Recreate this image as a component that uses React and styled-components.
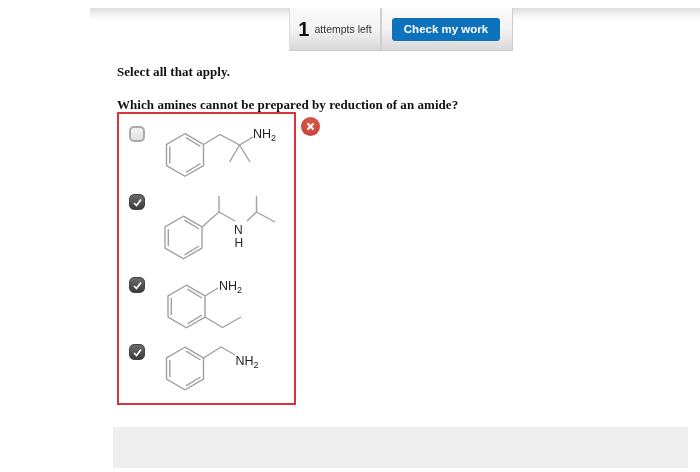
import React from 'react'
import styled, { createGlobalStyle } from 'styled-components'

const GlobalStyle = createGlobalStyle`
  html, body {
    margin: 0;
    padding: 0;
    background: #fff;
  }
`
const Page = styled.div`
  width: 700px;
  height: 472px;
  overflow: hidden;
  display: flex;
  flex-direction: column;
  padding-top: 8px;
  box-sizing: border-box;
  filter: blur(0.35px);
`
const TopBar = styled.div`
  margin-left: 90px;
  height: 43px;
  display: flex;
  padding-left: 199px;
  background: linear-gradient(#dcdcdc, #f4f4f4 7px, #fff 13px);
`
const Toolbar = styled.div`
  display: flex;
  height: 43px;
  background: linear-gradient(#fafafa, #f3f3f3 50%, #d9d9d9);
  border-bottom: 1px solid #c8c8c8;
  border-left: 1px solid #ddd;
  border-right: 1px solid #ccc;
  box-sizing: border-box;
`
const Attempts = styled.div`
  width: 92px;
  box-sizing: border-box;
  display: flex;
  align-items: center;
  justify-content: center;
  gap: 5px;
  border-right: 2px solid #cfcfcf;
  font-family: "Liberation Sans", Arial, sans-serif;
  color: #333;
  font-size: 10.5px;
`
const AttemptCount = styled.span`
  font-size: 20px;
  font-weight: bold;
  color: #111;
`
const CheckButton = styled.div`
  width: 108px;
  height: 23px;
  margin: 10px 12px 0 10px;
  border-radius: 3px;
  background: #0f72bd;
  color: #fff;
  font-family: "Liberation Sans", Arial, sans-serif;
  font-size: 11.5px;
  font-weight: bold;
  display: flex;
  align-items: center;
  justify-content: center;
  padding-bottom: 2px;
  box-sizing: border-box;
`
const Content = styled.div`
  padding: 14px 0 0 117px;
  font-family: "Liberation Serif", "Times New Roman", serif;
  font-weight: bold;
  font-size: 13px;
  color: #111;
`
const Prompt = styled.p`
  margin: 0;
  height: 33px;
  line-height: 14px;
  letter-spacing: 0.05px;
`
const AnswerRow = styled.div`
  display: flex;
  align-items: flex-start;
  margin-top: -19px;
`
const AnswerBox = styled.div`
  width: 179px;
  height: 293px;
  box-sizing: border-box;
  border: 2px solid #d8343c;
  padding: 12px 0 0 10px;
  display: flex;
  flex-direction: column;
`
const Option = styled.div`
  display: flex;
  gap: 15px;
  height: ${props => props.$height}px;
`
const Box = styled.div`
  width: 16px;
  height: 16px;
  box-sizing: border-box;
  border-radius: 5px;
  flex: none;
  border: ${props => (props.$checked ? '1px solid #444' : '2px solid #aaa')};
  background: ${props => (props.$checked ? 'linear-gradient(#6a6a6a, #3c3c3c)' : 'linear-gradient(#f2f2f2, #e2e2e2)')};
  display: flex;
  align-items: center;
  justify-content: center;
`
const ErrorBadge = styled.div`
  width: 19px;
  height: 19px;
  margin: 5px 0 0 5px;
  border-radius: 50%;
  background: radial-gradient(circle at 50% 35%, #dc5c4c, #c43a30);
  display: flex;
  align-items: center;
  justify-content: center;
`
const Footer = styled.div`
  margin: 22px 0 0 113px;
  width: 575px;
  height: 41px;
  background: #eeeeee;
`
const Bond = styled.path`
  fill: none;
  stroke: #a0a0a0;
  stroke-width: 1.4;
`
const Label = styled.text`
  font-family: "Liberation Sans", Arial, sans-serif;
  font-size: ${props => props.$size || 12.5}px;
  font-weight: normal;
  fill: #222;
`
const Sub = styled.tspan`
  font-size: 9px;
`

const Tick = () => (
  <svg width="11" height="11" viewBox="0 0 11 11">
    <path d="M2 6 L4.5 8.5 L9 2.5" fill="none" stroke="#fff" strokeWidth="1.7" />
  </svg>
)

// benzene ring, pointy top, three inner double bonds
const Ring = ({ cx, cy }) => {
  const w = 18.5
  const h = 10.5
  const r = 21.3
  const outer = `M${cx} ${cy - r} L${cx + w} ${cy - h} L${cx + w} ${cy + h} L${cx} ${cy + r} L${cx - w} ${cy + h} L${cx - w} ${cy - h} Z`
  const inner = [
    `M${cx - w + 3.3} ${cy - h + 2} L${cx - w + 3.3} ${cy + h - 2}`,
    `M${cx + 1} ${cy - r + 4} L${cx + w - 3} ${cy - h + 2}`,
    `M${cx + 1} ${cy + r - 4} L${cx + w - 3} ${cy + h - 2}`,
  ].join(' ')
  return <Bond d={`${outer} ${inner}`} />
}

const Nh2 = ({ x, y }) => (
  <Label x={x} y={y}>NH<Sub dy="2.5">2</Sub></Label>
)

const Molecule = ({ height, children }) => (
  <svg width="125" height={height} viewBox={`0 0 125 ${height}`} style={{ overflow: 'visible' }}>
    {children}
  </svg>
)

const App = () => (
  <Page>
    <GlobalStyle />
    <TopBar>
      <Toolbar>
        <Attempts>
          <AttemptCount>1</AttemptCount>
          attempts left
        </Attempts>
        <CheckButton>Check my work</CheckButton>
      </Toolbar>
    </TopBar>
    <Content>
      <Prompt>Select all that apply.</Prompt>
      <Prompt>Which amines cannot be prepared by reduction of an amide?</Prompt>
      <AnswerRow>
        <AnswerBox>
          <Option $height={68}>
            <Box />
            <Molecule height={68}>
              <Ring cx={25} cy={29} />
              <Bond d="M43.5 18.5 L60 8.5 L79.5 19 L93 11 M79.5 19 L69.5 36 M79.5 19 L90 36" />
              <Nh2 x={93} y={12} />
            </Molecule>
          </Option>
          <Option $height={83}>
            <Box $checked><Tick /></Box>
            <Molecule height={83}>
              <Ring cx={23.5} cy={43.5} />
              <Bond d="M42 33 L59 18 L59 2 M59 18 L75 27 M87 27 L96.5 18 L96.5 2 M96.5 18 L115 28" />
              <Label $size={12} x={74} y={40}>N</Label>
              <Label $size={12} x={74.5} y={52.5}>H</Label>
            </Molecule>
          </Option>
          <Option $height={67}>
            <Box $checked><Tick /></Box>
            <Molecule height={67}>
              <Ring cx={26.5} cy={29.5} />
              <Bond d="M45 19 L58 11 M45 40 L62.5 50.5 L81 40" />
              <Nh2 x={59} y={13} />
            </Molecule>
          </Option>
          <Option $height={60}>
            <Box $checked><Tick /></Box>
            <Molecule height={60}>
              <Ring cx={25} cy={24.5} />
              <Bond d="M43.5 14 L61 3 L75 11" />
              <Nh2 x={75.5} y={21} />
            </Molecule>
          </Option>
        </AnswerBox>
        <ErrorBadge>
          <svg width="9" height="9" viewBox="0 0 9 9">
            <path d="M1.5 1.5 L7.5 7.5 M7.5 1.5 L1.5 7.5" stroke="#fff" strokeWidth="2" />
          </svg>
        </ErrorBadge>
      </AnswerRow>
    </Content>
    <Footer />
  </Page>
)

export default App
